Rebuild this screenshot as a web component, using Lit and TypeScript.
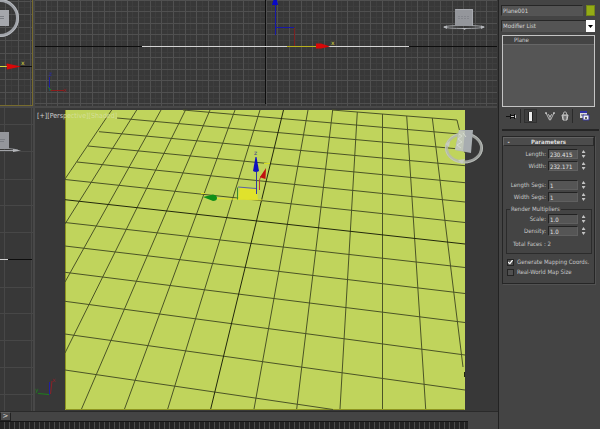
import { LitElement, html, css } from "lit";
import { customElement, property } from "lit/decorators.js";

type Line = [number, number, number, number];

const steps = (from: number, to: number, by: number): number[] => {
  const out: number[] = [];
  for (let v = from; v <= to; v += by) out.push(Math.floor(v) + 0.5);
  return out;
};

const gridPath = (xs: number[], ys: number[], w: number, h: number) =>
  xs.map((x) => `M${x} 0V${h}`).join("") + ys.map((y) => `M0 ${y}H${w}`).join("");

const toPath = (lines: Line[]) =>
  lines.map(([a, b, c, d]) => `M${a} ${b}L${c} ${d}`).join("");

/* Perspective floor grid, in the coordinates of the viewport's viewBox. */
const floorRows: Line[] = [
  [332, 110, 457, 120],
  [183, 110, 465, 134.5],
  [117, 118, 465, 149.5],
  [99, 131.7, 465, 165.7],
  [88, 146, 465, 182.7],
  [77, 162, 465, 202],
  [65, 179.5, 465, 222.5],
  [65, 222.5, 465, 267.5],
  [65, 246, 465, 293.5],
  [65, 272.3, 465, 322.5],
  [65, 301.3, 465, 355],
  [65, 334, 465, 390],
  [65, 370, 333, 409.5],
];
const floorColumns: Line[] = [
  [111.7, 110, 65, 179],
  [136.7, 110, 65, 224],
  [161, 110, 65, 282],
  [185.5, 110, 65, 353],
  [210, 110, 81.5, 409],
  [235, 110, 124.5, 409],
  [260, 110, 167.7, 409],
  [308, 110, 254, 409],
  [332.7, 110, 296.7, 409],
  [357.3, 112, 340, 409],
  [382.5, 114, 382.5, 409],
  [406.7, 116, 425.7, 409],
  [432.3, 118, 463, 367],
  [457, 120, 465, 153],
];
const floorAxes: Line[] = [
  [65, 199.7, 465, 244],
  [283.5, 110, 210.7, 409],
];

const sceneStyles = css`
  :host { display: block; contain: size; min-width: 0; min-height: 0; overflow: hidden; background: #383838; }
  svg { display: block; width: 100%; height: 100%; }
  text { font-family: "DejaVu Sans", sans-serif; font-size: 6px; }
  .grid { stroke: #505050; stroke-width: 1; fill: none; }
  .faint { stroke: #3e3e3e; stroke-width: 1; fill: none; }
  .axis { stroke: #0d0d0d; stroke-width: 1; fill: none; }
`;

@customElement("top-view")
class TopView extends LitElement {
  static styles = [sceneStyles, css`
    :host { border: solid #786c2e; border-width: 0 1px 1px 0; }
  `];
  render() {
    return html`<svg viewBox="0 0 32 105" preserveAspectRatio="xMinYMin slice" aria-label="Top viewport">
      <path class="faint" d=${gridPath([11.5, 24.5], steps(7.5, 105, 13), 32, 105)} />
      <path class="grid" d=${gridPath([5.5, 18.5, 30.5], [1.5, 14.5, 27.5, 40.5, 53.5, 79.5, 92.5], 32, 105)} />
      <path class="axis" d="M6 66.5H32" />
      <path d="M0 66.5H7" stroke="#d8d83c" />
      <path d="M6.500 64L7 63.500L21 66.500L7 69.500Z" fill="#d80808" />
      <text x="21" y="65" fill="#d8d83c">x</text>
      <circle cx="0" cy="18" r="17.500" fill="none" stroke="#9fa2a8" stroke-width="3" />
      <circle cx="0" cy="18" r="18.500" fill="none" stroke="#b4b7bc" stroke-width="1" />
      <path d="M0 10H9V26H0Z" fill="#a5a7ac" />
      <path d="M0 16.500H4M0 18.500H4" fill="none" stroke="#7b7e84" />
    </svg>`;
  }
}

@customElement("front-view")
class FrontView extends LitElement {
  static styles = sceneStyles;
  render() {
    const xs = steps(11, 465, 11.6);
    const ys = [0.5, 11.5, 23.5, 34.5, 57.5, 69.5, 80.5, 92.5, 103.5];
    return html`<svg viewBox="0 0 462 106" preserveAspectRatio="xMinYMin slice" aria-label="Front viewport">
      <path class="faint" d=${gridPath(steps(5, 465, 11.6), [6.5, 17.5, 29.5, 40.5, 52.5, 63.5, 75.5, 86.5, 98.5], 462, 106)} />
      <path class="grid" d=${gridPath(xs, ys, 462, 106)} />
      <path class="axis" d="M0 46.500H462M230.500 0V104" />
      <path d="M107 46.500H374" stroke="#d4d4d4" />
      <path d="M240.500 4V35M240.500 27.500H259" fill="none" stroke="#1818a8" />
      <path d="M259.500 28V46" stroke="#7c2020" />
      <path d="M237 5L238.500 0H242L243 5Z" fill="#0808c8" />
      <path d="M252 46.500H282" stroke="#b8b020" />
      <path d="M281 43.500H286L295 46.500L286 48.500H281Z" fill="#d80808" />
      <text x="296" y="45" fill="#d8d83c">x</text>
      <path d="M14.500 77V91" stroke="#2020a0" />
      <path d="M15 90.500H29" stroke="#8c1c1c" />
      <path d="M13 87L16 90M14 90H16" stroke="#208020" />
      <text x="14" y="76" fill="#2828a8">z</text>
      <text x="28" y="92" fill="#8c1c1c">x</text>
      <ellipse cx="429" cy="27" rx="20" ry="1.500" fill="none" stroke="#a2a4a8" />
      <path d="M408 27L412 25.500V29ZM450 27L446 25.500V29ZM427 28H432L429.500 30Z" fill="#b4b6ba" />
      <path d="M420 9H438V26H420Z" fill="#94969b" />
      <path d="M420.500 9.500H437.500V26" fill="none" stroke="#a8aab0" />
      <path d="M423 16.500H434M423 18.500H434" stroke="#84868c" stroke-dasharray="2 1" />
    </svg>`;
  }
}

@customElement("left-view")
class LeftView extends LitElement {
  static styles = sceneStyles;
  render() {
    return html`<svg viewBox="0 0 33 303" preserveAspectRatio="xMinYMin slice" aria-label="Left viewport">
      <path d=${gridPath([4.5, 31.5], [16.5, 43.5, 71.5, 97.5, 124.5, 179.5, 205.5, 232.5, 259.5, 286.5], 33, 303)}
        fill="none" stroke="#474747" />
      <path class="axis" d="M8 151.500H32" />
      <path d="M0 151.500H8" stroke="#cfcfcf" />
      <path d="M0 42.500H14" stroke="#a2a4a8" />
      <path d="M9 40.500Q14 41 18 42" fill="none" stroke="#85878b" />
      <path d="M13 41L21 42.500L13 44Z" fill="#b4b6ba" />
      <path d="M0 24H9V41H0Z" fill="#94969b" />
      <path d="M0 31.500H5M0 33.500H4" stroke="#7b7e84" />
    </svg>`;
  }
}

@customElement("perspective-view")
class PerspectiveView extends LitElement {
  static styles = [sceneStyles, css`
    .row { stroke: #4b5426; stroke-width: 1; fill: none; }
    .main { stroke: #22280c; stroke-width: 1; fill: none; }
    .label { font-family: "DejaVu Sans Condensed", "DejaVu Sans", sans-serif; font-size: 7px; }
  `];
  render() {
    return html`<svg viewBox="35 108 462 303" preserveAspectRatio="xMinYMin slice" aria-label="Perspective viewport">
      <path d="M65 110H465V410H65Z" fill="#c0d45c" />
      <path d="M65.500 110V409.500H464.500" fill="none" stroke="#8c9420" />
      <path class="row" d=${toPath(floorRows)} />
      <path class="row" d=${toPath(floorColumns)} />
      <path class="main" d=${toPath(floorAxes)} />
      <path d="M464.500 372V377" class="main" />

      <path d="M240 188L257 189L258 200L238 199Z" fill="#e0e22c" />
      <path d="M217 198.500L262 200" stroke="#e0e02c" fill="none" />
      <path d="M237.500 199.500V187.500" fill="none" stroke="#3c8c2c" />
      <path d="M238 187L256 188.500" fill="none" stroke="#5c64a0" />
      <path d="M256.500 172V194" stroke="#3038a0" />
      <path d="M259.500 190V180L261 176" fill="none" stroke="#b83c34" />
      <path d="M253 171L255.500 157L256.500 157L259 171Q256 173 253 171Z" fill="#1010c0" />
      <path d="M260 177L266 168L265.500 179L262 178Z" fill="#c01010" />
      <path d="M203 197L213 194.500Q217 195 217 198Q217 201 213 201Z" fill="#109018" />
      <path d="M264 163.500H270M201 193.500H205" stroke="#d8e020" />
      <text x="254" y="155" fill="#3c4488">z</text>

      <path d="M49.500 394.500V382" stroke="#2020a0" fill="none" />
      <path d="M50.500 394L52 381" stroke="#8c2028" fill="none" />
      <path d="M49 394.500L38 393.500" stroke="#1c801c" fill="none" />
      <text x="35" y="392" fill="#1c801c">y</text>
      <text x="52" y="382" fill="#8c2028">x</text>

      <ellipse cx="464" cy="148" rx="17.500" ry="14" fill="none" stroke="#b4b8b4" stroke-width="3" opacity=".8" />
      <ellipse cx="464" cy="148" rx="18.500" ry="15" fill="none" stroke="#ccd0cc" stroke-width="1" opacity=".6" />
      <path d="M459 130L473 130L471 153L455 150Z" fill="#a8adb0" />
      <path d="M459 130L465 131L463 151L455 150Z" fill="#c0c6b8" />
      <path d="M459 134L462 136L458 139L462 142L457 145L461 148M463 133L466 137" fill="none" stroke="#d6dcd0" />
      <path d="M445 144L450 141L449 147ZM458 160L465 159L462 164Z" fill="#c8ccc0" />

      <text class="label" x="37" y="118" fill="#d0d0d0">[+][Pers<tspan fill="#d4df98">pective][Shaded]</tspan></text>
    </svg>`;
  }
}

@customElement("number-field")
class NumberField extends LitElement {
  @property() label = "";
  @property() value = "";
  static styles = css`
    :host { display: grid; grid-template-columns: 1fr 30px 7px; column-gap: 2px; align-items: center; height: 12px; }
    label { text-align: right; white-space: nowrap; }
    input {
      box-sizing: border-box; width: 100%; height: 10px; margin: 0; padding: 0 1px; border: 1px solid;
      border-color: #222 #606060 #606060 #222; background: #555; color: #e4e4e4; font: inherit; outline: none;
    }
    .spin { display: grid; gap: 2px; justify-items: center; }
    button { width: 4px; height: 3px; border: 0; padding: 0; background: #c4c4c4; }
    .up { clip-path: polygon(50% 0, 100% 100%, 0 100%); }
    .down { clip-path: polygon(0 0, 100% 0, 50% 100%); }
  `;
  render() {
    return html`<label for="n">${this.label}:</label>
      <input id="n" .value=${this.value} />
      <div class="spin">
        <button class="up" aria-label="Increase ${this.label}"></button>
        <button class="down" aria-label="Decrease ${this.label}"></button>
      </div>`;
  }
}

@customElement("modify-panel")
class ModifyPanel extends LitElement {
  static styles = css`
    :host {
      display: block; box-sizing: border-box; background: #444; color: #c8c8c8;
      border-left: 1px solid #222; padding: 5px 5px 0 2px;
      font: 6px/8px "DejaVu Sans Condensed", "DejaVu Sans", sans-serif;
    }
    * { box-sizing: border-box; }
    .name { display: flex; gap: 3px; height: 11px; }
    .name input {
      flex: 1; min-width: 0; padding: 0 1px; border: 1px solid; border-color: #262626 #555 #555 #262626;
      background: #545454; color: #d4d4d4; font: inherit;
    }
    .swatch { width: 9px; padding: 0; border: 1px solid #74861a; background: #94ac14; }
    .modifiers { position: relative; margin-top: 4px; height: 12px; }
    select {
      appearance: none; display: block; width: 100%; height: 12px; padding: 0 1px; margin: 0; border-radius: 0;
      border: 1px solid; border-color: #262626 #555 #555 #262626; background: #545454; color: #d4d4d4; font: inherit;
    }
    .arrow { position: absolute; right: 0; top: 0; width: 9px; height: 12px; background: #fff; pointer-events: none; }
    .stack { margin: 3px 0 0 1px; height: 72px; border: 1px solid #c4c4c4; background: #555; }
    .stack button {
      display: block; width: 100%; height: 9px; padding: 0 0 0 11px; border: 0; border-bottom: 1px solid #666;
      background: #444; color: #d0d0d0; font: inherit; text-align: left;
    }
    .tools { display: grid; grid-template-columns: 20px 20px 17px 15px 1fr; margin-top: 2px; height: 14px; }
    .tools button { display: grid; place-items: center; padding: 0; border: 0; background: none; }
    .tools .pressed { border: 1px solid #303030; width: 13px; margin-left: 3px; background: #3e3e3e; }
    .tools .ruled { border-right: 1px solid #2a2a2a; }
    .tools svg { display: block; }
    .rollouts { margin: 6px -4px 0 1px; border-top: 2px solid #252525; padding: 5px 4px 0 0; }
    .rollout { border: 1px solid #262626; height: 148px; box-shadow: 1px 1px 0 #525252; }
    .title {
      display: grid; grid-template-columns: 9px 1fr 9px; width: 100%; height: 9px; padding: 0; border: 1px solid;
      border-color: #626262 #2c2c2c #2c2c2c #626262; background: #4c4c4c; color: #dcdcdc; font: inherit; font-weight: bold;
      align-items: center;
    }
    .fields { padding: 2px 7px 0 0; }
    .pair + .pair { margin-top: 7px; }
    fieldset { margin: 2px 2px 0 3px; padding: 0 4px 0 0; border: 1px solid #2b2b2b; height: 49px; min-width: 0; }
    legend { margin-left: 3px; padding: 0 1px; height: 8px; }
    .faces { padding: 3px 0 0 6px; }
    .checks { display: grid; gap: 2px; padding: 4px 0 0 4px; }
    .checks label { display: flex; gap: 3px; height: 8px; align-items: center; white-space: nowrap; }
    .checks input {
      appearance: none; flex: none; width: 7px; height: 7px; margin: 0; border: 1px solid #242424; background: #505050;
      display: grid; place-items: center;
    }
    .checks input:checked::before {
      content: ""; width: 5px; height: 5px; background: #fff;
      clip-path: polygon(0 40%, 35% 65%, 85% 0, 100% 20%, 40% 100%, 0 70%);
    }
  `;
  render() {
    return html`
      <div class="name">
        <input aria-label="Object name" value="Plane001" />
        <button class="swatch" aria-label="Object colour"></button>
      </div>
      <div class="modifiers">
        <select aria-label="Modifier list"><option>Modifier List</option></select>
        <svg class="arrow" viewBox="0 0 9 12" aria-hidden="true"><path d="M2 5H7L4.500 8Z" fill="#000" /></svg>
      </div>
      <div class="stack"><button>Plane</button></div>
      <div class="tools">
        <button class="ruled" aria-label="Pin stack">
          <svg width="10" height="8" viewBox="0 0 10 8"><path d="M0 4.500H4M4.500 2V7M5 3.500H8M5 5.500H8M8.500 2V7" fill="none" stroke="#111" /><path d="M5 4.500H8M9.500 3V6" stroke="#ccc" /></svg>
        </button>
        <button class="pressed" aria-label="Show end result">
          <svg width="5" height="9" viewBox="0 0 5 9"><path d="M0 0H5V9H0Z" fill="#222" /><path d="M1 0H4V9H1Z" fill="#eee" /></svg>
        </button>
        <button aria-label="Make unique">
          <svg width="10" height="9" viewBox="0 0 10 9"><path d="M1 1L4.500 8L5.500 8L9 1M5 3V8M3 2L5 5L7 2" fill="none" stroke="#b4b4b4" /><path d="M0 1H2M8 1H10" stroke="#eee" /></svg>
        </button>
        <button class="ruled" aria-label="Remove modifier">
          <svg width="8" height="10" viewBox="0 0 8 10"><path d="M2 4L3 1H5L6 4" fill="none" stroke="#aaa" /><path d="M1 4H7L6 9H2Z" fill="#999" stroke="#ccc" /><path d="M3 6H5M3 8H5" stroke="#444" /></svg>
        </button>
        <button aria-label="Configure modifier sets">
          <svg width="11" height="10" viewBox="0 0 11 10"><path d="M1 0H8V7H1Z" fill="#ddd" /><path d="M1 0H8V2H1Z" fill="#3030a8" /><path d="M2 4H5" stroke="#555" /><path d="M4 4H10V9H4Z" fill="#f0f0f0" stroke="#3838a0" /><path d="M6 7H8M7 6V8" stroke="#333" /></svg>
        </button>
      </div>
      <div class="rollouts">
        <section class="rollout">
          <button class="title"><span>-</span><span>Parameters</span></button>
          <div class="fields">
            <div class="pair">
              <number-field label="Length" value="230.415"></number-field>
              <number-field label="Width" value="232.171"></number-field>
            </div>
            <div class="pair">
              <number-field label="Length Segs" value="1"></number-field>
              <number-field label="Width Segs" value="1"></number-field>
            </div>
          </div>
          <fieldset>
            <legend>Render Multipliers</legend>
            <number-field label="Scale" value="1.0"></number-field>
            <number-field label="Density" value="1.0"></number-field>
            <div class="faces">Total Faces : 2</div>
          </fieldset>
          <div class="checks">
            <label><input type="checkbox" checked />Generate Mapping Coords.</label>
            <label><input type="checkbox" />Real-World Map Size</label>
          </div>
        </section>
      </div>`;
  }
}

@customElement("app-root")
class AppRoot extends LitElement {
  static styles = css`
    :host { display: grid; grid-template-columns: 1fr 102px; min-height: 100vh; background: #444; }
    .work { display: grid; grid-template-rows: 1fr 10px 8px; min-width: 0; }
    .views {
      display: grid; grid-template-columns: 33px 1fr; grid-template-rows: 106px 1fr; gap: 2px; min-height: 0;
      border-right: 1px solid #383838; background: #484848;
    }
    .slider { display: flex; border-top: 1px solid #2a2a2a; box-sizing: border-box; }
    .next {
      width: 11px; padding: 0; border: 1px solid; border-color: #5c5c5c #222 #222 #222; background: #4c4c4c; color: #ddd;
      font: 7px/7px "DejaVu Sans", sans-serif;
    }
    .ruler {
      margin-right: 30px; border-top: 1px solid #161616; box-sizing: border-box;
      background: repeating-linear-gradient(90deg, #232323 0 4px, #4a4a4a 4px 5px);
    }
  `;
  render() {
    return html`
      <main class="work">
        <div class="views">
          <top-view></top-view>
          <front-view></front-view>
          <left-view></left-view>
          <perspective-view></perspective-view>
        </div>
        <div class="slider"><button class="next" aria-label="Next frame">&gt;</button></div>
        <div class="ruler"></div>
      </main>
      <modify-panel></modify-panel>`;
  }
}
